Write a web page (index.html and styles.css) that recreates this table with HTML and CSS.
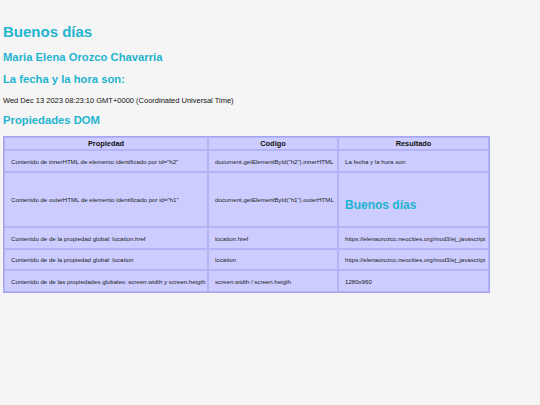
FILE: index.html
```html
<!DOCTYPE html>
<html lang="es">
<head>
<meta charset="utf-8">
<title>Propiedades DOM</title>
<link rel="stylesheet" href="styles.css">
</head>
<body>
<main class="page">
  <h1 class="title">Buenos días</h1>
  <h2 class="name">Maria Elena Orozco Chavarria</h2>
  <h3 class="subtitle">La fecha y la hora son:</h3>
  <p class="date">Wed Dec 13 2023 08:23:10 GMT+0000 (Coordinated Universal Time)</p>
  <h2 class="section">Propiedades DOM</h2>
  <table class="props">
    <thead>
      <tr>
        <th class="c1">Propiedad</th>
        <th class="c2">Codigo</th>
        <th class="c3">Resultado</th>
      </tr>
    </thead>
    <tbody>
      <tr>
        <td>Contenido de innerHTML de elemento identificado por id="h2"</td>
        <td>document.getElementById("h2").innerHTML</td>
        <td>La fecha y la hora son:</td>
      </tr>
      <tr>
        <td>Contenido de outerHTML de elemento identificado por id="h1"</td>
        <td>document.getElementById("h1").outerHTML</td>
        <td><h1 class="cell-title">Buenos días</h1></td>
      </tr>
      <tr>
        <td>Contenido de de la propiedad global: location.href</td>
        <td>location.href</td>
        <td>https://elenaorozco.neocities.org/mod3/ej_javascript</td>
      </tr>
      <tr>
        <td>Contenido de de la propiedad global: location</td>
        <td>location</td>
        <td>https://elenaorozco.neocities.org/mod3/ej_javascript</td>
      </tr>
      <tr>
        <td>Contenido de de las propiedades globales: screen.width y screen.heigth</td>
        <td>screen.width / screen.heigth</td>
        <td>1280x960</td>
      </tr>
    </tbody>
  </table>
</main>
</body>
</html>
```
FILE: styles.css
```css
html, body {
  margin: 0;
  padding: 0;
  background: #f5f5f5;
}

body {
  font-family: "Liberation Sans", Arial, sans-serif;
  font-size: 7.5px;
  color: #111;
}

.page {
  padding: 23px 3px 0 3px;
}

.title,
.name,
.subtitle,
.section {
  color: #1fb4d0;
  font-weight: bold;
  margin: 0;
  line-height: normal;
}

.title {
  font-size: 15px;
}

.name {
  font-size: 11.25px;
  margin-top: 11px;
}

.subtitle {
  font-size: 11.25px;
  margin-top: 10px;
}

.date {
  font-size: 7.5px;
  margin: 11px 0 0 0;
}

.section {
  font-size: 11.25px;
  margin-top: 9px;
}

.props {
  margin-top: 10px;
  width: 487px;
  table-layout: fixed;
  background: #ccccff;
  border: 1px solid #a4a4f0;
  border-collapse: separate;
  border-spacing: 0;
}

.props th,
.props td {
  box-sizing: border-box;
  border: 1px solid #b3b3f6;
  text-align: left;
  vertical-align: middle;
  white-space: nowrap;
}

.props th {
  font-size: 7.4px;
  font-weight: bold;
  text-align: center;
  padding: 1px 4px;
  color: #111;
}

.props td {
  font-size: 6.1px;
  padding: 6.5px 6px 6px 6px;
  color: #222;
}

.c1 { width: 204px; }
.c2 { width: 130px; }
.c3 { width: 151px; }

.cell-title {
  color: #1fb4d0;
  font-size: 12px;
  font-weight: bold;
  margin: 19px 0 8px 0;
  line-height: normal;
}
```
